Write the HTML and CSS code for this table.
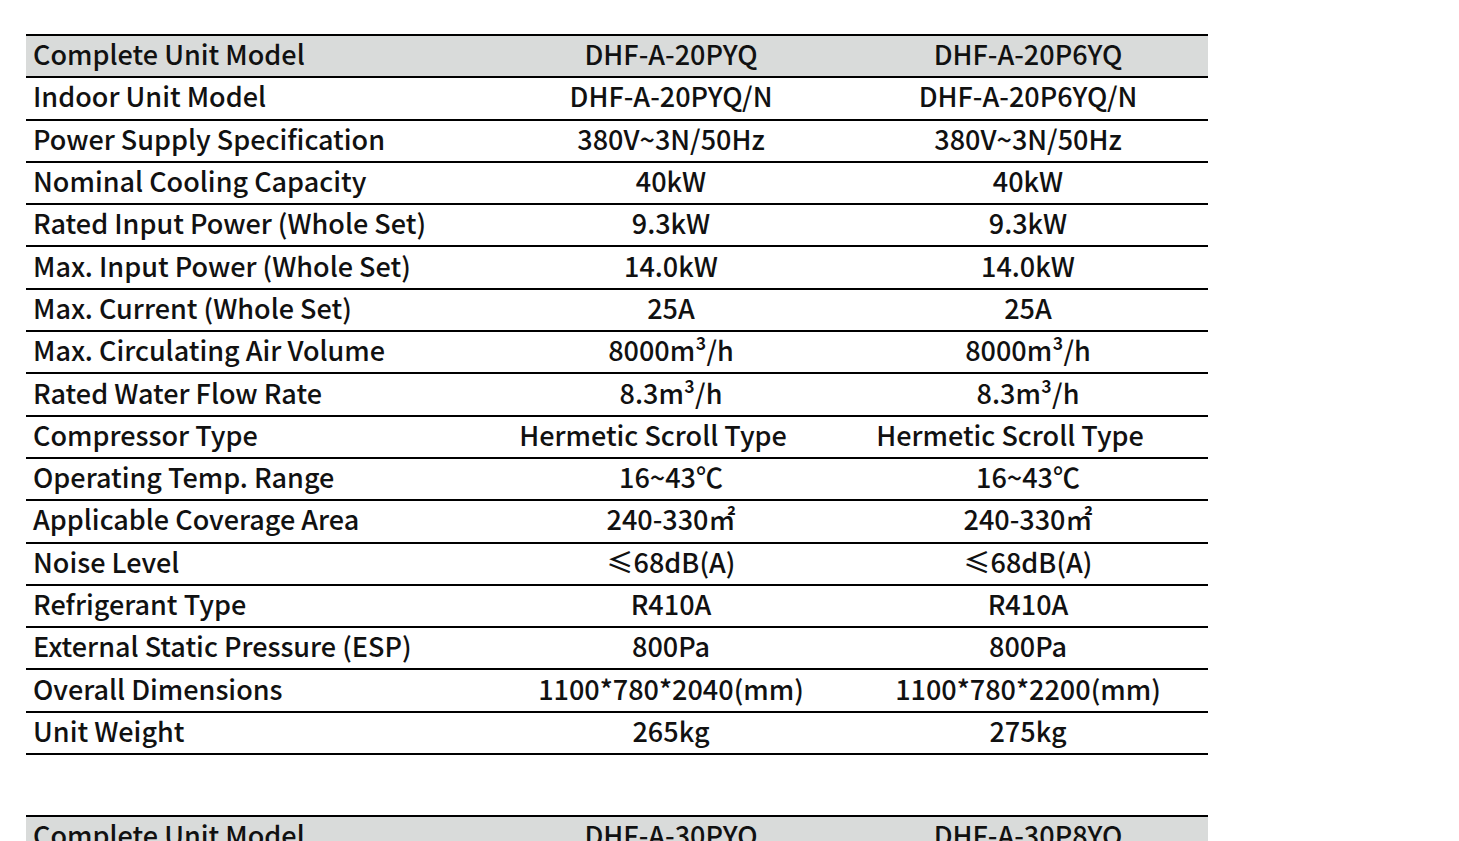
FILE: index.html
```html
<!DOCTYPE html>
<html lang="en">
<head>
<meta charset="utf-8">
<title>Specifications</title>
<link rel="stylesheet" href="styles.css">
</head>
<body>
<div class="page">
<table class="spec">
  <colgroup><col class="c1"><col class="c2"><col class="c3"></colgroup>
  <tr class="head"><td>Complete Unit Model</td><td>DHF-A-20PYQ</td><td>DHF-A-20P6YQ</td></tr>
  <tr><td>Indoor Unit Model</td><td>DHF-A-20PYQ/N</td><td>DHF-A-20P6YQ/N</td></tr>
  <tr><td>Power Supply Specification</td><td>380V~3N/50Hz</td><td>380V~3N/50Hz</td></tr>
  <tr><td>Nominal Cooling Capacity</td><td>40kW</td><td>40kW</td></tr>
  <tr><td>Rated Input Power (Whole Set)</td><td>9.3kW</td><td>9.3kW</td></tr>
  <tr><td>Max. Input Power (Whole Set)</td><td>14.0kW</td><td>14.0kW</td></tr>
  <tr><td>Max. Current (Whole Set)</td><td>25A</td><td>25A</td></tr>
  <tr><td>Max. Circulating Air Volume</td><td>8000m³/h</td><td>8000m³/h</td></tr>
  <tr><td>Rated Water Flow Rate</td><td>8.3m³/h</td><td>8.3m³/h</td></tr>
  <tr><td>Compressor Type</td><td class="offset">Hermetic Scroll Type</td><td class="offset">Hermetic Scroll Type</td></tr>
  <tr><td>Operating Temp. Range</td><td>16~43℃</td><td>16~43℃</td></tr>
  <tr><td>Applicable Coverage Area</td><td>240-330㎡</td><td>240-330㎡</td></tr>
  <tr><td>Noise Level</td><td>≤68dB(A)</td><td>≤68dB(A)</td></tr>
  <tr><td>Refrigerant Type</td><td>R410A</td><td>R410A</td></tr>
  <tr><td>External Static Pressure (ESP)</td><td>800Pa</td><td>800Pa</td></tr>
  <tr><td>Overall Dimensions</td><td>1100*780*2040(mm)</td><td>1100*780*2200(mm)</td></tr>
  <tr><td>Unit Weight</td><td>265kg</td><td>275kg</td></tr>
</table>
<table class="spec">
  <colgroup><col class="c1"><col class="c2"><col class="c3"></colgroup>
  <tr class="head"><td>Complete Unit Model</td><td>DHF-A-30PYQ</td><td>DHF-A-30P8YQ</td></tr>
  <tr><td>Indoor Unit Model</td><td>DHF-A-30PYQ/N</td><td>DHF-A-30P8YQ/N</td></tr>
  <tr><td>Power Supply Specification</td><td>380V~3N/50Hz</td><td>380V~3N/50Hz</td></tr>
</table>
</div>
</body>
</html>
```
FILE: styles.css
```css
html, body {
  margin: 0;
  padding: 0;
  background: #fff;
}
.page {
  padding: 34px 0 0 26px;
  display: flex;
  flex-direction: column;
  gap: 60px;
}
.spec {
  width: 1182px;
  border-collapse: collapse;
  table-layout: fixed;
  font-family: "Noto Sans CJK SC", "Noto Sans", sans-serif;
  font-size: 27px;
  font-weight: 500;
  color: #111;
  border-top: 2px solid #000;
}
.c1 { width: 468px; }
.c2 { width: 354px; }
.c3 { width: 360px; }
.spec td {
  height: 36.3px;
  padding: 0 0 4px 0;
  border-bottom: 2px solid #000;
  text-align: center;
  vertical-align: middle;
  line-height: 30px;
  white-space: nowrap;
}
.spec td:first-child {
  text-align: left;
  padding-left: 7px;
}
.spec td.offset {
  padding-right: 36px;
}
.spec .head td {
  background: #d9dbda;
}
```
